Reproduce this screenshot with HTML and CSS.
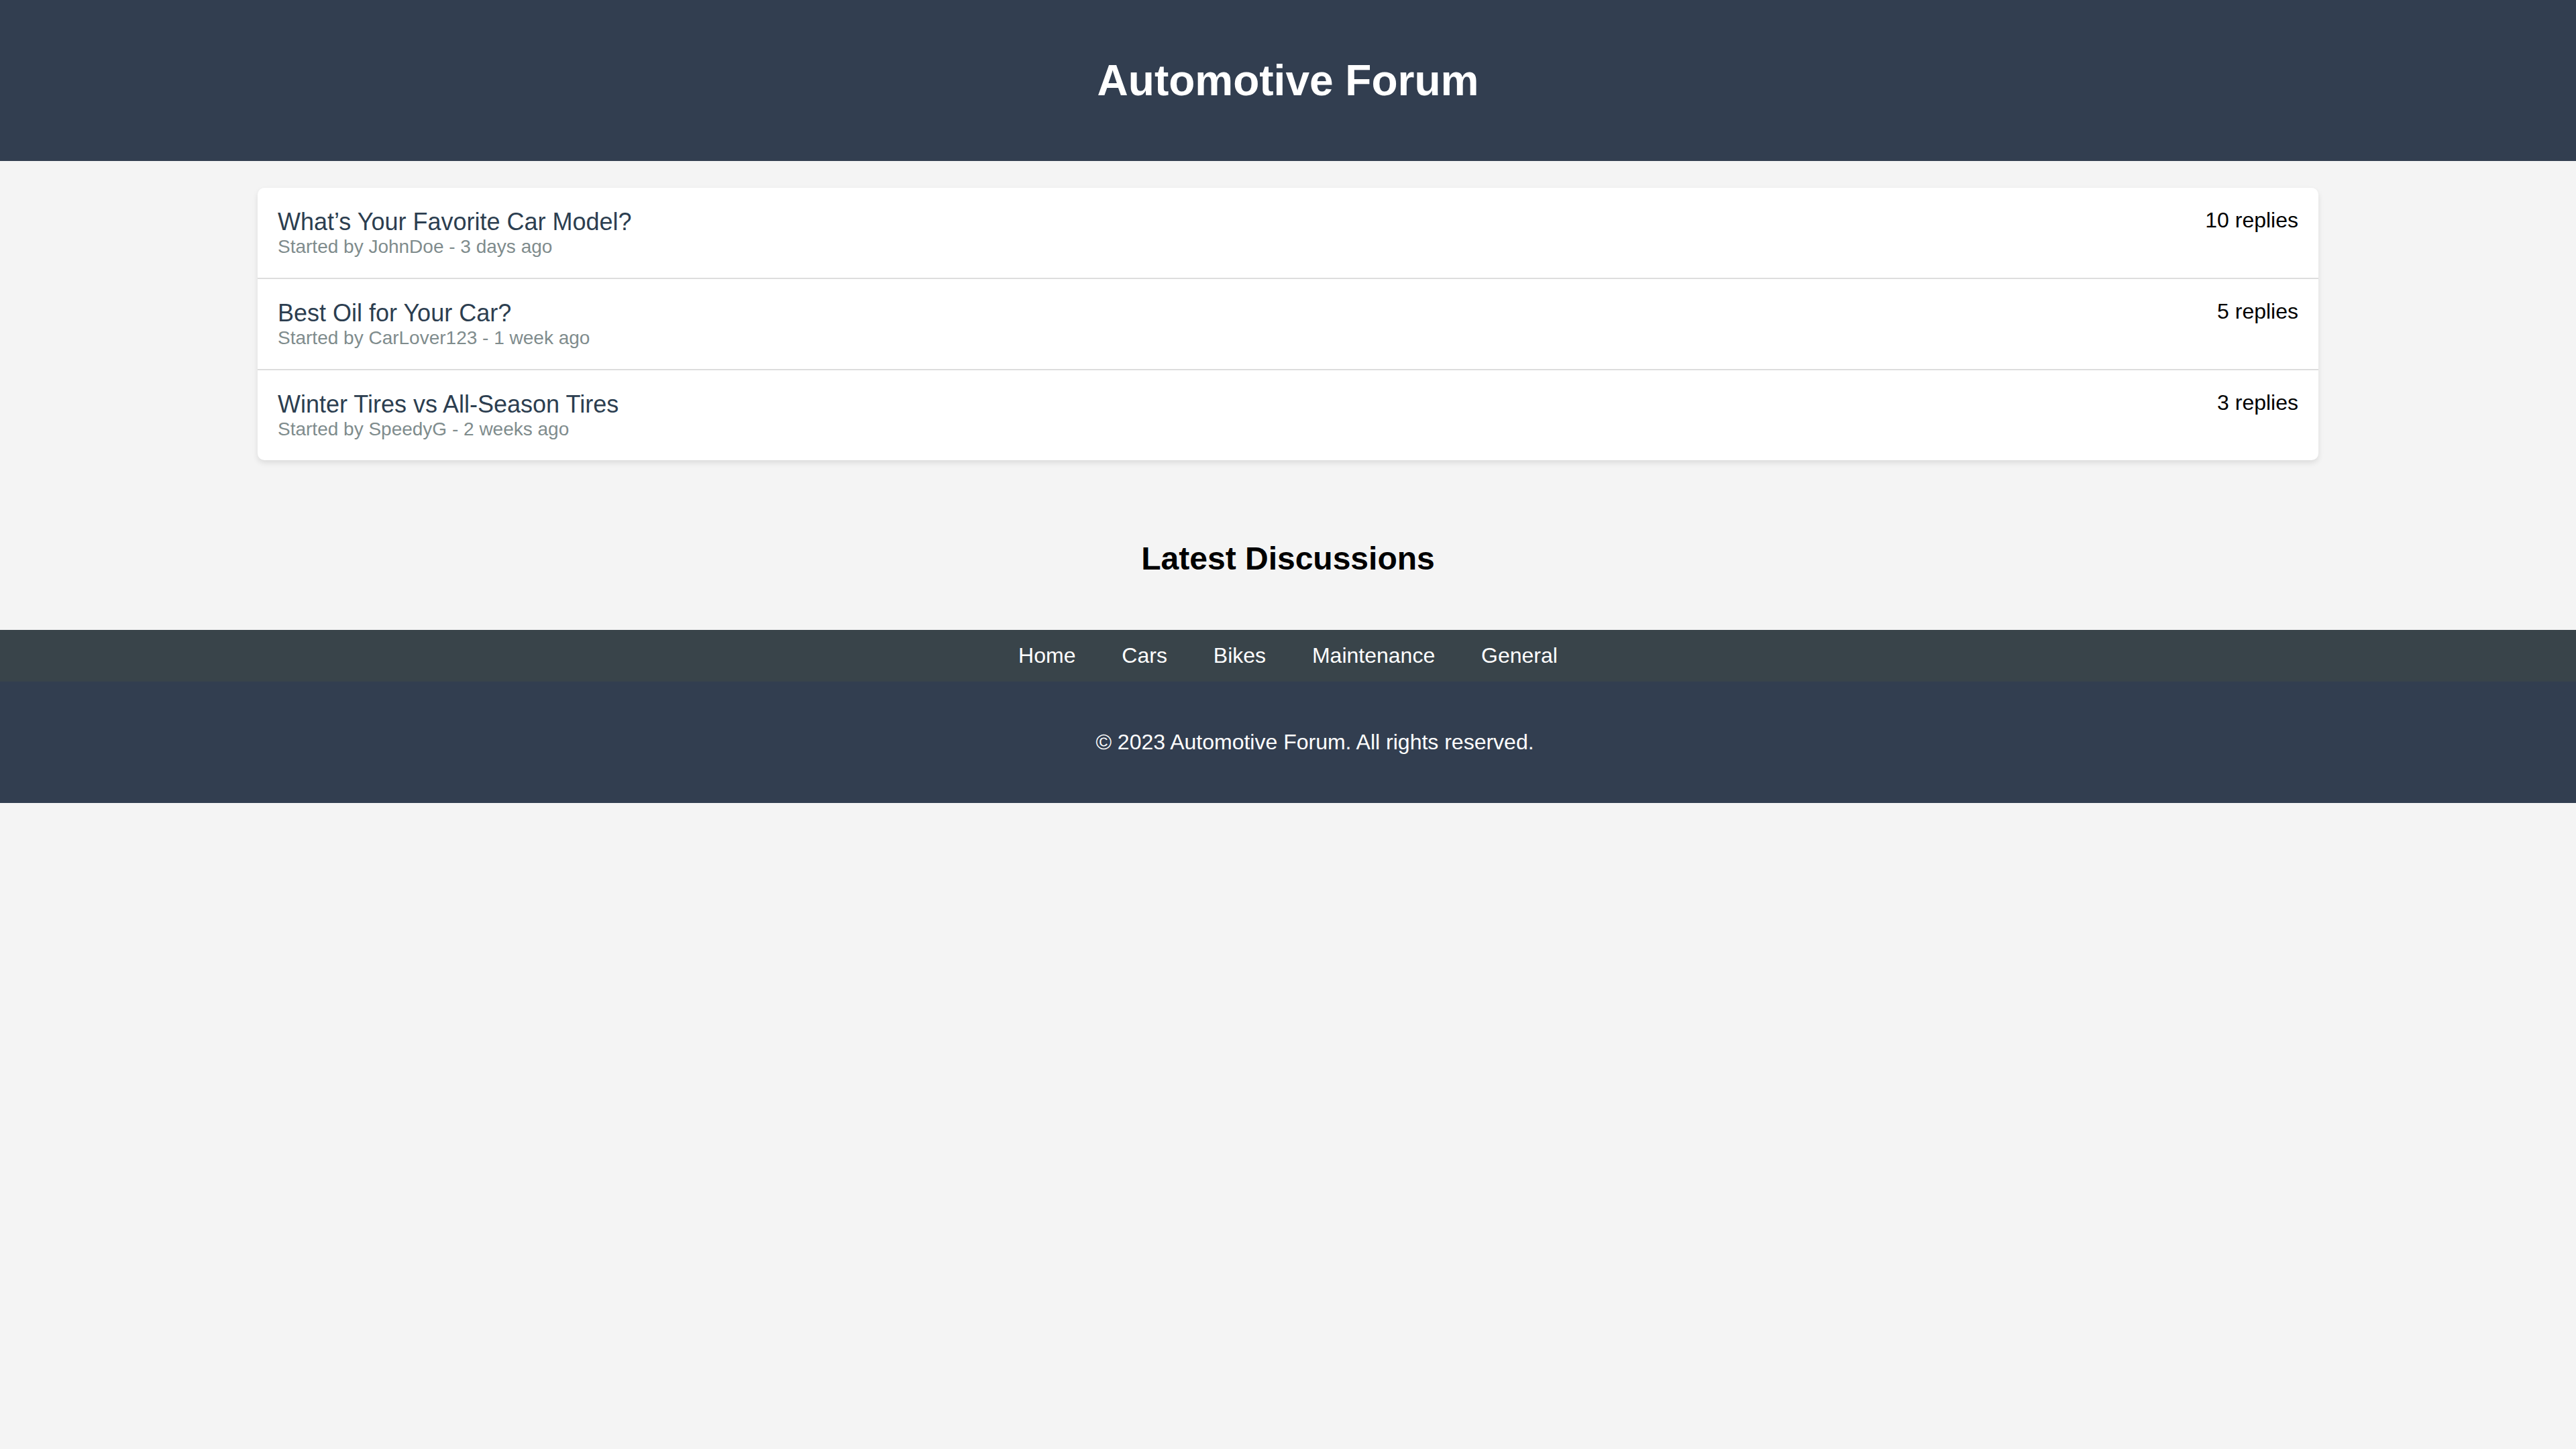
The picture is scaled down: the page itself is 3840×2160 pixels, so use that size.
FILE: index.html
```html
<!DOCTYPE html>
<html lang="en">
<head>
<meta charset="utf-8">
<title>Automotive Forum</title>
<link rel="stylesheet" href="styles.css">
</head>
<body>
<header class="site-header">
  <h1 class="site-title">Automotive Forum</h1>
</header>
<main class="main">
  <div class="topic-list">
    <div class="topic">
      <div class="topic-info">
        <div class="topic-title">What’s Your Favorite Car Model?</div>
        <div class="topic-meta">Started by JohnDoe - 3 days ago</div>
      </div>
      <div class="topic-replies">10 replies</div>
    </div>
    <div class="topic">
      <div class="topic-info">
        <div class="topic-title">Best Oil for Your Car?</div>
        <div class="topic-meta">Started by CarLover123 - 1 week ago</div>
      </div>
      <div class="topic-replies">5 replies</div>
    </div>
    <div class="topic">
      <div class="topic-info">
        <div class="topic-title">Winter Tires vs All-Season Tires</div>
        <div class="topic-meta">Started by SpeedyG - 2 weeks ago</div>
      </div>
      <div class="topic-replies">3 replies</div>
    </div>
  </div>
  <h2 class="section-title">Latest Discussions</h2>
</main>
<nav class="site-nav">
  <a href="#">Home</a>
  <a href="#">Cars</a>
  <a href="#">Bikes</a>
  <a href="#">Maintenance</a>
  <a href="#">General</a>
</nav>
<footer class="site-footer">
  <p class="copyright">© 2023 Automotive Forum. All rights reserved.</p>
</footer>
</body>
</html>
```
FILE: styles.css
```css
html, body {
  margin: 0;
  padding: 0;
}
body {
  background: #f4f4f4;
  font-family: "Liberation Sans", Arial, Helvetica, sans-serif;
  color: #000;
}
.site-header {
  background: #323e50;
  color: #fff;
  text-align: center;
  padding: 40px 0;
}
.site-title {
  margin: 43px 0;
  font-size: 64px;
  font-weight: bold;
  line-height: normal;
}
.main {
  padding: 40px 0;
}
.topic-list {
  width: 80%;
  margin: 0 auto;
  background: #fff;
  border-radius: 10px;
  box-shadow: 0 4px 8px rgba(0, 0, 0, 0.1);
}
.topic {
  display: flex;
  justify-content: space-between;
  align-items: flex-start;
  padding: 30px;
  border-bottom: 2px solid #dddddd;
}
.topic:last-child {
  border-bottom: none;
}
.topic-title {
  font-size: 36px;
  color: #2c3e50;
}
.topic-meta {
  font-size: 28px;
  color: #7f8c8d;
}
.topic-replies {
  font-size: 32px;
  color: #000;
}
.section-title {
  text-align: center;
  font-size: 48px;
  font-weight: bold;
  margin: 119px 0 39px;
}
.site-nav {
  background: #39444a;
  text-align: center;
  padding: 20px 0;
  font-size: 32px;
}
.site-nav a {
  color: #fff;
  text-decoration: none;
  margin: 0 30px;
}
.site-footer {
  background: #323e50;
  color: #fff;
  text-align: center;
  padding: 40px 0 40px 80px;
}
.copyright {
  margin: 32px 0;
  font-size: 32px;
}
```
